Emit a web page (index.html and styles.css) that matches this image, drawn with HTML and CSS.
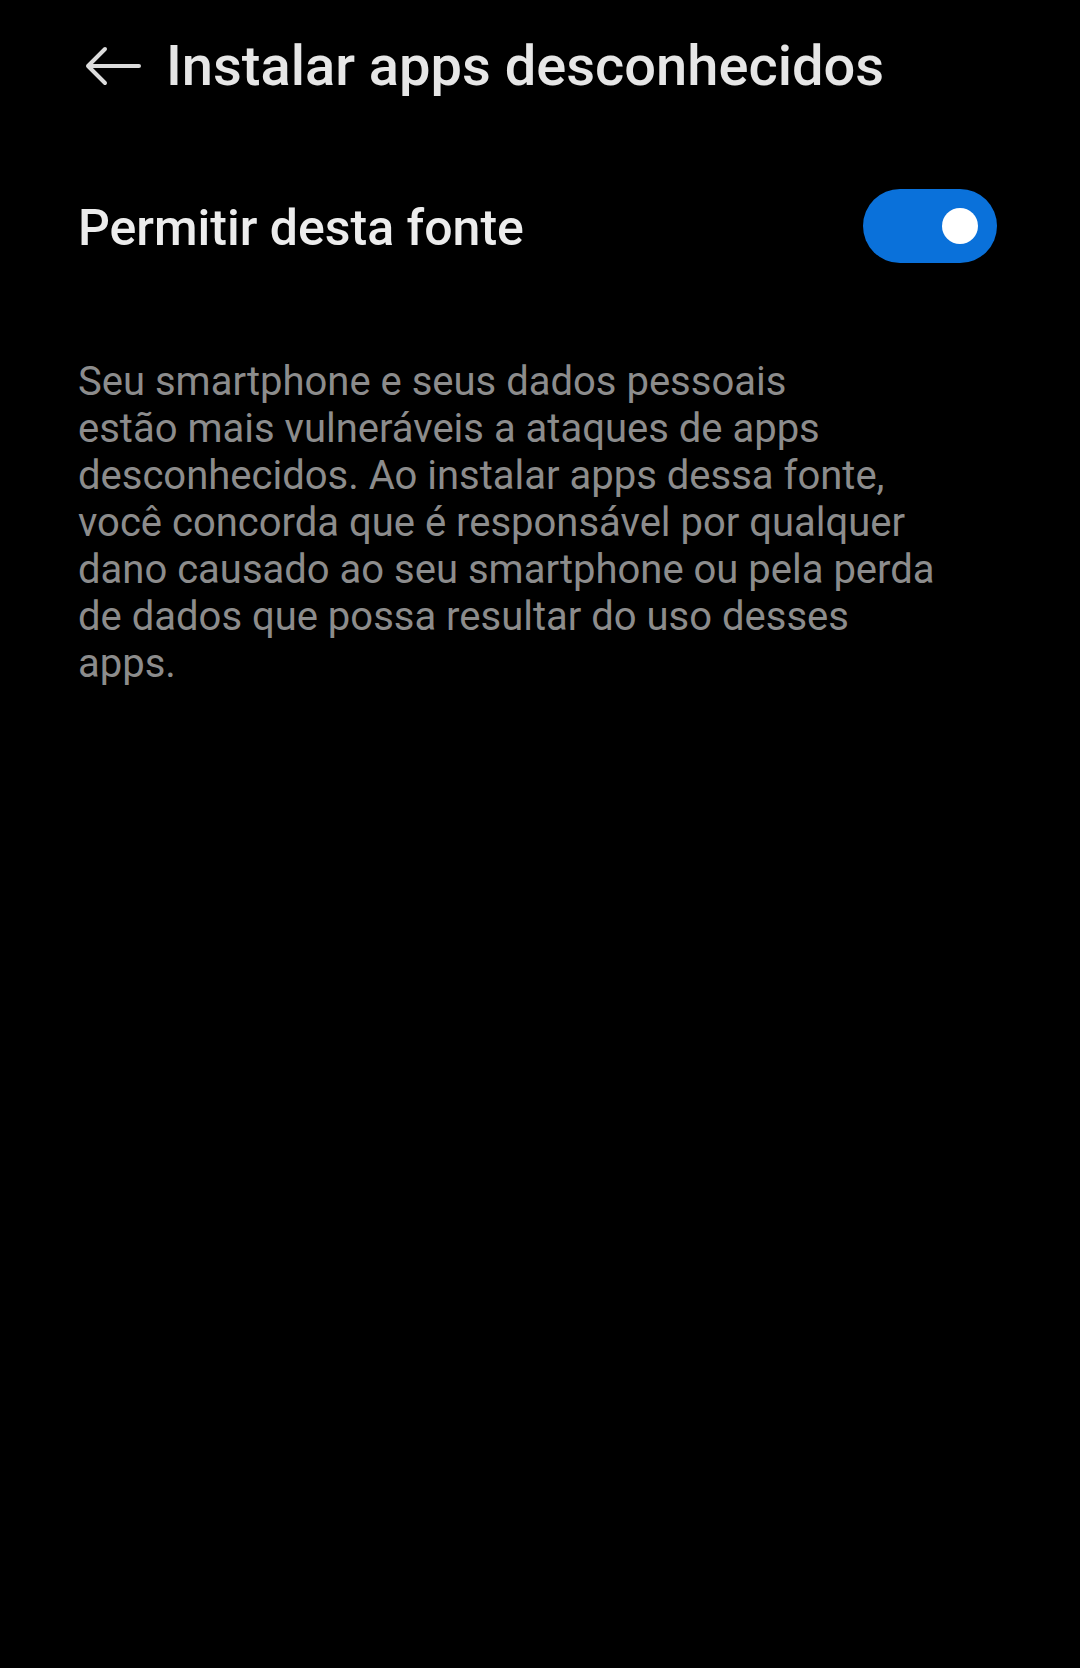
FILE: index.html
```html
<!DOCTYPE html>
<html lang="pt-BR">
<head>
<meta charset="utf-8">
<link rel="stylesheet" href="styles.css">
</head>
<body>
<div class="screen">
  <header class="appbar">
    <svg class="back" width="58" height="40" viewBox="0 0 58 40" aria-hidden="true">
      <path d="M55 20H4M21 3L4 20L21 37" fill="none" stroke="#dcdcdc" stroke-width="4" stroke-linecap="round" stroke-linejoin="round"/>
    </svg>
    <h1 class="title">Instalar apps desconhecidos</h1>
  </header>
  <div class="row">
    <span class="label">Permitir desta fonte</span>
    <div class="switch"><div class="knob"></div></div>
  </div>
  <p class="desc">Seu smartphone e seus dados pessoais<br>estão mais vulneráveis a ataques de apps<br>desconhecidos. Ao instalar apps dessa fonte,<br>você concorda que é responsável por qualquer<br>dano causado ao seu smartphone ou pela perda<br>de dados que possa resultar do uso desses<br>apps.</p>
</div>
</body>
</html>
```
FILE: styles.css
```css
html, body {
  margin: 0;
  padding: 0;
  background: #000;
}
.screen {
  width: 1080px;
  height: 1668px;
  background: #000;
  font-family: Roboto, "Noto Sans", sans-serif;
  color: #e8e8e8;
}
.appbar {
  display: flex;
  align-items: center;
  height: 132px;
  padding-left: 84px;
  gap: 24px;
}
.back {
  flex: none;
}
.title {
  margin: 0;
  font-size: 56px;
  font-weight: 500;
  color: #e6e6e6;
}
.row {
  display: flex;
  align-items: center;
  justify-content: space-between;
  padding: 57px 83px 0 78px;
}
.label {
  font-size: 50px;
  font-weight: 500;
  color: #ececec;
  position: relative;
  top: 2px;
}
.switch {
  width: 134px;
  height: 74px;
  border-radius: 37px;
  background: #0a71da;
  display: flex;
  align-items: center;
  justify-content: flex-end;
  padding-right: 19px;
  box-sizing: border-box;
}
.knob {
  width: 36px;
  height: 36px;
  border-radius: 50%;
  background: #fff;
}
.desc {
  margin: 95px 0 0 78px;
  font-size: 40px;
  line-height: 47px;
  color: #8c8c8c;
}
```
